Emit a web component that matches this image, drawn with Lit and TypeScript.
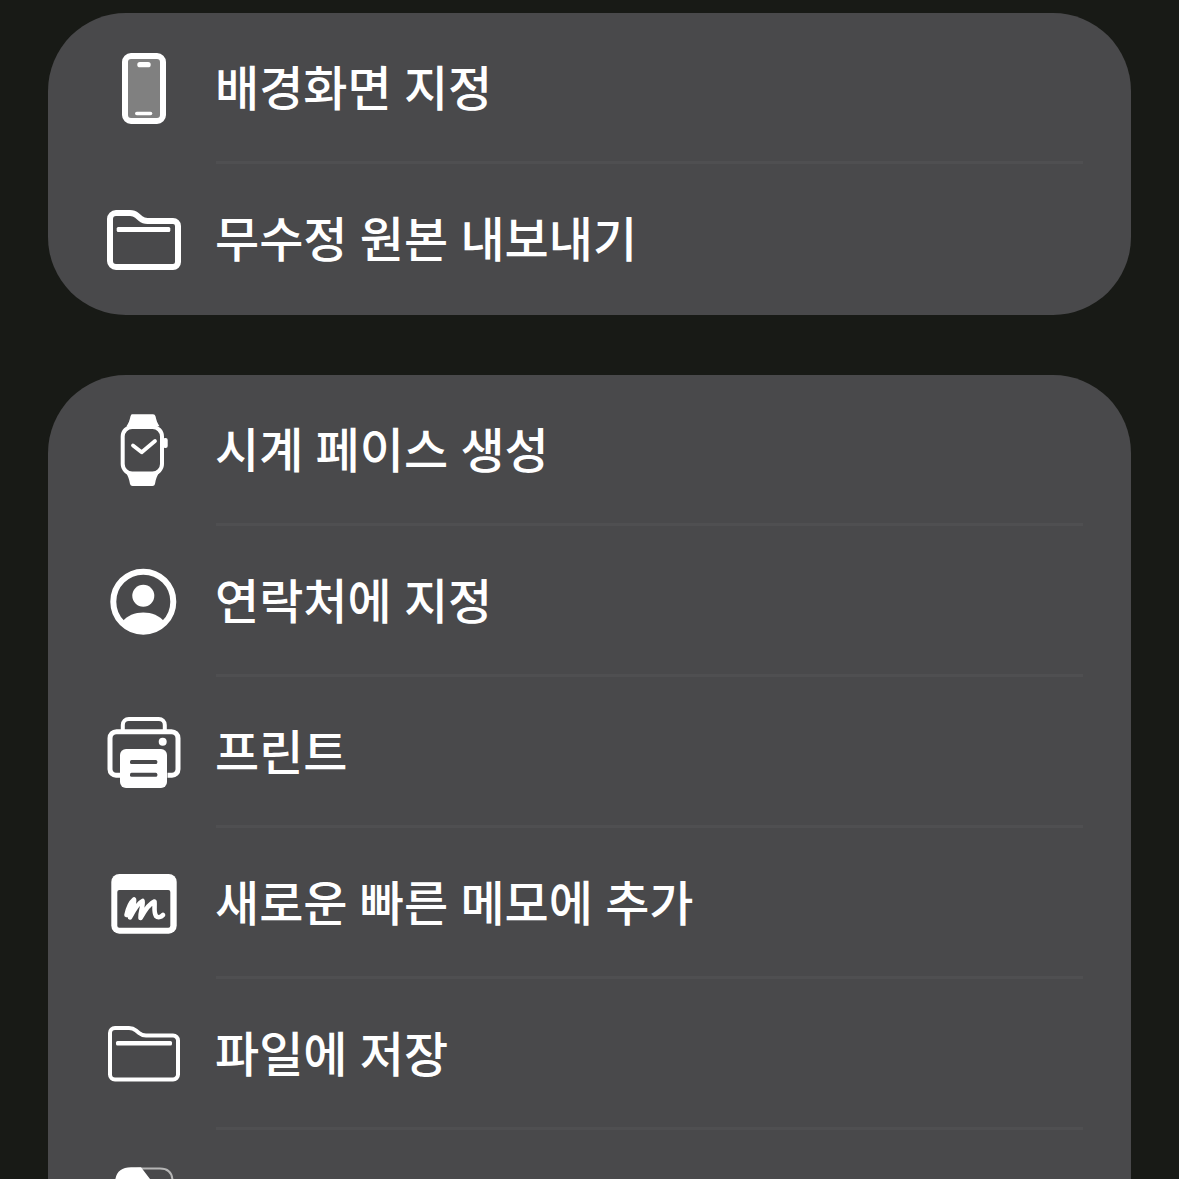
import { LitElement, html, css, svg } from "lit";
import { customElement } from "lit/decorators.js";

const W = "#ffffff";
const BG = "#49494b";

const icons = {
  phone: svg`
    <rect x="125" y="56" width="38" height="65" rx="6" fill="#808080" stroke="${W}" stroke-width="6"/>
    <rect x="137.3" y="62" width="13.4" height="5.3" rx="2.6" fill="${W}"/>
    <rect x="135" y="111.7" width="17.3" height="3.6" rx="1.8" fill="${W}"/>`,
  folderBold: svg`
    <path d="M110 219 a6 6 0 0 1 6-6 h14 q4 0 7 2.500 l3.500 3 q3 2.500 7 2.500 h25.500 a5 5 0 0 1 5 5 v36 a5 5 0 0 1-5 5 h-57 a6 6 0 0 1-6-6 z" fill="none" stroke="${W}" stroke-width="6" stroke-linejoin="round"/>
    <rect x="116.700" y="227" width="53.600" height="5" rx="1.500" fill="${W}"/>`,
  watch: svg`
    <path d="M132 414.300 h21 q2 0 2.500 2 c0.800 4 2 7 4 10 h-33 c2-3 3.200-6 4-10 q0.500-2 1.500-2 z M126 473 h33 c-2 3-3.200 6-4 11 q-0.500 2-2.500 2 h-20 q-2 0-2.500-2 c-0.800-5-2-8-4-11 z" fill="${W}"/>
    <rect x="122.700" y="427" width="39.300" height="46.500" rx="9.500" fill="${BG}" stroke="${W}" stroke-width="4"/>
    <rect x="163" y="438" width="4.700" height="10" rx="2" fill="${W}"/>
    <path d="M133 445.500 L141.700 452.300 L155 441" fill="none" stroke="${W}" stroke-width="3.800" stroke-linecap="round" stroke-linejoin="round"/>`,
  contact: svg`
    <circle cx="143.300" cy="601.700" r="30" fill="none" stroke="${W}" stroke-width="6"/>
    <circle cx="143.300" cy="595.700" r="11" fill="${W}"/>
    <path d="M122 622 C127 615.500 135 612.500 143.300 612.500 C151.600 612.500 159.600 615.500 164.600 622 A30 30 0 0 1 122 622 Z" fill="${W}"/>`,
  printer: svg`
    <path d="M122.800 730 v-5 a6 6 0 0 1 6-6 h30 a6 6 0 0 1 6 6 v5" fill="none" stroke="${W}" stroke-width="4"/>
    <path d="M120 775.200 h-4 a6 6 0 0 1-6-6 v-31 a6.500 6.500 0 0 1 6.500-6.500 h55 a6.500 6.500 0 0 1 6.500 6.500 v31 a6 6 0 0 1-6 6 h-4.500" fill="none" stroke="${W}" stroke-width="5"/>
    <rect x="120" y="749" width="47" height="39" rx="6" fill="${W}"/>
    <rect x="130" y="760" width="27.300" height="4" rx="1.500" fill="${BG}"/>
    <rect x="130" y="772.700" width="27.300" height="4" rx="1.500" fill="${BG}"/>
    <circle cx="162.700" cy="741.700" r="4" fill="${W}"/>`,
  memo: svg`
    <rect x="111.300" y="874" width="65.400" height="59.700" rx="8" fill="${W}"/>
    <rect x="117.300" y="890" width="53" height="37.700" rx="2" fill="${BG}"/>
    <path d="M126.500 915 C128 908 131 902 134 899.500 C135 904 130.500 911 130 917.500 C134 910 139 902.500 142.500 901 C143.500 906 140 912 140.500 918 C145 910 150.500 903 154.500 901.500 C155 907 153.500 912 156 916 C158 918 161 917 163 915" fill="none" stroke="${W}" stroke-width="4.600" stroke-linecap="round" stroke-linejoin="round"/>`,
  folderThin: svg`
    <path d="M110 1033 a5 5 0 0 1 5-5 h14 q4 0 7 2.500 l3 2.500 q3 2.500 7 2.500 h27 a5 5 0 0 1 5 5 v34 a5 5 0 0 1-5 5 h-58 a5 5 0 0 1-5-5 z" fill="none" stroke="${W}" stroke-width="4" stroke-linejoin="round"/>
    <rect x="116" y="1041" width="56" height="4.500" rx="1.500" fill="${W}"/>`,
  tag: svg`
    <path d="M116 1195 q0-26.500 26-26.500 h18 q12 0 12.500 12 v15" fill="none" stroke="#b5b5b5" stroke-width="2"/>
    <path d="M115 1182 q1-14.700 16-14.700 h10 l9 11.700 h-35 z" fill="${W}"/>`,
};

const groups: { key: keyof typeof icons; y: number; label: string }[][] = [
  [
    { key: "phone", y: 40, label: "배경화면 지정" },
    { key: "folderBold", y: 191, label: "무수정 원본 내보내기" },
  ],
  [
    { key: "watch", y: 402, label: "시계 페이스 생성" },
    { key: "contact", y: 553, label: "연락처에 지정" },
    { key: "printer", y: 704, label: "프린트" },
    { key: "memo", y: 855, label: "새로운 빠른 메모에 추가" },
    { key: "folderThin", y: 1006, label: "파일에 저장" },
    { key: "tag", y: 1157, label: "" },
  ],
];

@customElement("app-root")
export class AppRoot extends LitElement {
  static styles = css`
    :host {
      display: block;
      width: 1179px;
      height: 1179px;
      overflow: hidden;
      background: #181a16;
      font-family: "Noto Sans CJK KR", "Noto Sans", sans-serif;
    }
    .page {
      display: flex;
      flex-direction: column;
      gap: 60px;
      padding: 13px 48px 0;
    }
    .card {
      background: #49494b;
      border-radius: 78px;
      padding-right: 48px;
    }
    .row {
      display: flex;
      align-items: center;
      height: 151px;
    }
    .icon {
      flex: none;
      width: 96px;
      height: 96px;
      margin: 0 24px 1px 48px;
    }
    .text {
      flex: 1;
      align-self: stretch;
      display: flex;
      align-items: center;
      color: #fff;
      font-size: 48px;
      font-weight: 500;
      letter-spacing: 0;
      word-spacing: 1.5px;
      white-space: nowrap;
      text-indent: -1px;
      padding-bottom: 4px;
      border-bottom: 3px solid #4f4f51;
      box-sizing: border-box;
    }
    .row:last-child .text {
      border-bottom-color: transparent;
    }
  `;

  render() {
    return html`<div class="page">
      ${groups.map(
        (g) => html`<div class="card">
          ${g.map(
            (r) => html`<div class="row">
              <svg class="icon" viewBox="96 ${r.y} 96 96">${icons[r.key]}</svg>
              <div class="text">${r.label}</div>
            </div>`
          )}
        </div>`
      )}
    </div>`;
  }
}
